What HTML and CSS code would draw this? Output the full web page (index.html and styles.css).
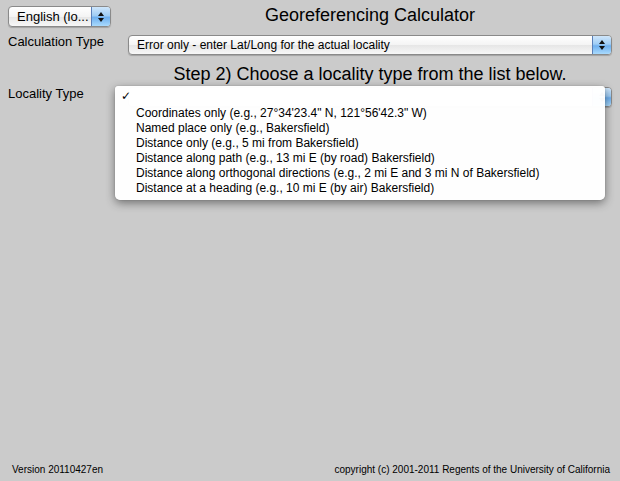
FILE: index.html
```html
<!DOCTYPE html>
<html>
<head>
<meta charset="utf-8">
<link rel="stylesheet" href="styles.css">
</head>
<body>
<div class="page">
  <div class="row row1">
    <div class="left">
      <div class="select lang"><span class="sel-text">English (lo...</span><span class="arrows"><i class="up"></i><i class="down"></i></span></div>
    </div>
    <div class="right title">Georeferencing Calculator</div>
  </div>
  <div class="row row2">
    <div class="left label">Calculation Type</div>
    <div class="right">
      <div class="select wide"><span class="sel-text">Error only - enter Lat/Long for the actual locality</span><span class="arrows"><i class="up"></i><i class="down"></i></span></div>
    </div>
  </div>
  <div class="row row3">
    <div class="left"></div>
    <div class="right step">Step 2) Choose a locality type from the list below.</div>
  </div>
  <div class="row row4">
    <div class="left label">Locality Type</div>
    <div class="right anchor">
      <div class="select wide"><span class="sel-text"></span><span class="arrows"><i class="up"></i><i class="down"></i></span></div>
      <div class="menu">
        <div class="item checked"><span class="check">✓</span></div>
        <div class="item">Coordinates only (e.g., 27°34'23.4" N, 121°56'42.3" W)</div>
        <div class="item">Named place only (e.g., Bakersfield)</div>
        <div class="item">Distance only (e.g., 5 mi from Bakersfield)</div>
        <div class="item">Distance along path (e.g., 13 mi E (by road) Bakersfield)</div>
        <div class="item">Distance along orthogonal directions (e.g., 2 mi E and 3 mi N of Bakersfield)</div>
        <div class="item">Distance at a heading (e.g., 10 mi E (by air) Bakersfield)</div>
      </div>
    </div>
  </div>
  <div class="footer">
    <span>Version 20110427en</span>
    <span>copyright (c) 2001-2011 Regents of the University of California</span>
  </div>
</div>
</body>
</html>
```
FILE: styles.css
```css
html, body {
  margin: 0;
  padding: 0;
}
body {
  background: #cbcbcb;
  font-family: "Liberation Sans", Arial, sans-serif;
  color: #000;
}
.page {
  height: 481px;
  display: flex;
  flex-direction: column;
  padding: 0 8px;
  box-sizing: border-box;
}
.row {
  display: flex;
}
.left {
  width: 120px;
  flex: none;
}
.right {
  flex: 1;
  min-width: 0;
}
.row1 {
  margin-top: 6px;
  height: 21px;
}
.row2 {
  margin-top: 8px;
  height: 20px;
}
.row3 {
  margin-top: 8px;
  height: 22px;
}
.row4 {
  margin-top: 2px;
  height: 20px;
}
.title {
  text-align: center;
  font-size: 18px;
  line-height: 19px;
}
.step {
  text-align: center;
  font-size: 18px;
  line-height: 22px;
}
.label {
  font-size: 13px;
  line-height: 14px;
}
.select {
  display: flex;
  align-items: center;
  box-sizing: border-box;
  height: 20px;
  border: 1px solid #8a8a8a;
  border-radius: 4px;
  background: linear-gradient(#ffffff, #f4f4f4 50%, #e6e6e6 51%, #f7f7f7);
  box-shadow: 0 1px 1px rgba(0,0,0,0.2);
  overflow: hidden;
  font-size: 12px;
}
.lang {
  width: 103px;
  height: 21px;
  font-size: 13px;
}
.wide {
  width: 484px;
}
.sel-text {
  flex: 1;
  padding-left: 8px;
  white-space: nowrap;
  overflow: hidden;
}
.arrows {
  flex: none;
  width: 18px;
  height: 100%;
  border-left: 1px solid #5a7fb8;
  background: linear-gradient(#cfe6fb, #9fcdf5 45%, #6fb0ef 55%, #a9dafd);
  display: flex;
  flex-direction: column;
  align-items: center;
  justify-content: center;
  gap: 2px;
}
.arrows i {
  display: block;
  width: 0;
  height: 0;
  border-left: 3px solid transparent;
  border-right: 3px solid transparent;
}
.arrows .up {
  border-bottom: 4px solid #111;
}
.arrows .down {
  border-top: 4px solid #111;
}
.anchor {
  position: relative;
}
.menu {
  position: absolute;
  left: -13px;
  top: -1px;
  width: 490px;
  box-sizing: border-box;
  padding: 5px 0 4px;
  background: rgba(255,255,255,0.98);
  border-radius: 3px 3px 5px 5px;
  box-shadow: 0 3px 10px rgba(0,0,0,0.45), 0 0 1px rgba(0,0,0,0.4);
}
.item {
  height: 15px;
  line-height: 15px;
  font-size: 12px;
  padding-left: 21px;
  white-space: nowrap;
  position: relative;
}
.check {
  position: absolute;
  left: 6px;
  top: -2px;
  font-size: 12px;
  font-weight: bold;
  font-family: "DejaVu Sans", sans-serif;
}
.footer {
  margin-top: auto;
  margin-bottom: 5px;
  display: flex;
  justify-content: space-between;
  padding: 0 2px 0 4px;
  font-size: 10px;
  line-height: 12px;
}
```
